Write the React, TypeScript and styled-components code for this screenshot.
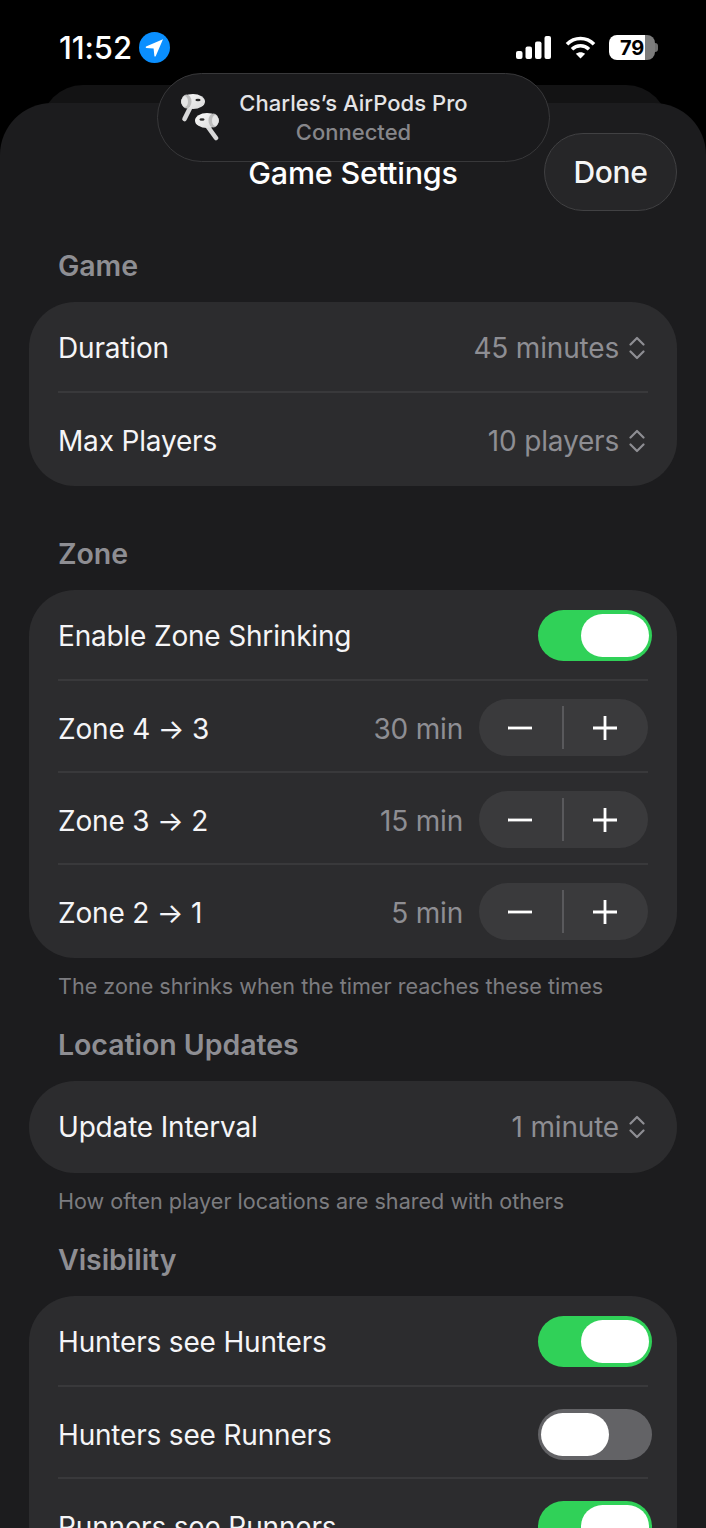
import styled, { createGlobalStyle } from "styled-components";

const GlobalStyle = createGlobalStyle`
    html, body {
        margin: 0;
        padding: 0;
        width: 706px;
        height: 1528px;
        overflow: hidden;
        background: #000;
    }
    body {
        font-family: Inter, "Liberation Sans", sans-serif;
        -webkit-font-smoothing: antialiased;
    }
`;

const Screen = styled.div`
    position: relative;
    width: 706px;
    height: 1528px;
    overflow: hidden;
    background: #000;
    display: flex;
    flex-direction: column;
`;

const StatusBar = styled.div`
    height: 103px;
    flex: none;
    box-sizing: border-box;
    padding: 32px 48px 0 59px;
    display: flex;
    justify-content: space-between;
    align-items: flex-start;
`;

const TimeGroup = styled.div`
    display: flex;
    align-items: center;
    gap: 7px;
`;

const Time = styled.span`
    color: #fff;
    font-size: 31px;
    line-height: 31px;
    font-weight: 500;
    letter-spacing: -0.1px;
`;

const StatusIcons = styled.div`
    display: flex;
    align-items: center;
    gap: 13.5px;
    height: 31px;
`;

const BatteryWrap = styled.div`
    display: flex;
    align-items: center;
`;

const BatteryBody = styled.div<{ $level: number }>`
    width: 46px;
    height: 25px;
    border-radius: 8px;
    background: linear-gradient(
        to right,
        #fff ${(p) => p.$level}%,
        #7c7c7c ${(p) => p.$level}%
    );
    display: flex;
    align-items: center;
    justify-content: center;
    color: #000;
    font-size: 20px;
    font-weight: 700;
    letter-spacing: -0.3px;
`;

const BatteryCap = styled.div`
    width: 3px;
    height: 9px;
    border-radius: 0 3px 3px 0;
    background: #6e6e6e;
`;

const BackSheet = styled.div`
    position: absolute;
    left: 41px;
    right: 38px;
    top: 85px;
    height: 60px;
    border-radius: 42px 42px 0 0;
    background: #131314;
`;

const Sheet = styled.div`
    position: relative;
    flex: 1;
    background: #1c1c1e;
    border-radius: 52px 52px 0 0;
    padding: 30px 29px 0;
    overflow: hidden;
`;

const Header = styled.header`
    display: grid;
    grid-template-columns: 1fr auto 1fr;
    align-items: center;
    margin-bottom: 38px;
`;

const Title = styled.h1`
    grid-column: 2;
    margin: 1px 0 0;
    color: #fff;
    font-size: 30.5px;
    line-height: 36px;
    font-weight: 500;
    letter-spacing: -0.2px;
    white-space: nowrap;
`;

const DoneButton = styled.button`
    grid-column: 3;
    justify-self: end;
    width: 133px;
    height: 78px;
    box-sizing: border-box;
    border-radius: 39px;
    border: 1.5px solid #414143;
    background: #262628;
    color: #f5f5f5;
    font-family: inherit;
    font-size: 30px;
    font-weight: 500;
    letter-spacing: -0.3px;
    padding: 0;
`;

const AirPodsPill = styled.div`
    position: absolute;
    left: 157px;
    top: 73px;
    width: 393px;
    height: 89px;
    box-sizing: border-box;
    border-radius: 45px;
    border: 1.5px solid #38383a;
    background: #1a1a1c;
    display: grid;
    grid-template-columns: 56px 1fr 56px;
    align-items: center;
    padding: 0 23px;
`;

const PillText = styled.div`
    display: flex;
    flex-direction: column;
    align-items: center;
    gap: 1px;
    white-space: nowrap;
`;

const PillName = styled.span`
    color: #e4e4e6;
    font-size: 22px;
    line-height: 28px;
    font-weight: 500;
    letter-spacing: 0.05px;
`;

const PillStatus = styled.span`
    color: #86868a;
    font-size: 22px;
    line-height: 28px;
    font-weight: 500;
`;

const Section = styled.section<{ $hasNote?: boolean }>`
    margin-bottom: ${(p) => (p.$hasNote ? 28 : 51)}px;
`;

const SectionLabel = styled.h2`
    margin: 0 29px 19px;
    color: #8e8e93;
    font-size: 28.5px;
    line-height: 34px;
    font-weight: 600;
    letter-spacing: -0.05px;
`;

const Card = styled.div`
    background: #2c2c2e;
    border-radius: 46px;
    padding: 0 29px;
`;

const Row = styled.div`
    position: relative;
    height: 92px;
    box-sizing: border-box;
    display: flex;
    align-items: center;
    justify-content: space-between;
    & + & {
        padding-top: 1px;
    }
    & + &::before {
        content: "";
        position: absolute;
        top: -3px;
        left: 0;
        right: 0;
        height: 2px;
        background: #39393b;
    }
`;

const RowLabel = styled.span`
    color: #f5f5f7;
    font-size: 28px;
    font-weight: 400;
    letter-spacing: -0.18px;
    display: flex;
    align-items: center;
`;

const RowValue = styled.span`
    color: #8e8e93;
    font-size: 28px;
    font-weight: 400;
    letter-spacing: -0.18px;
`;

const PickerValue = styled.div`
    display: flex;
    align-items: center;
    gap: 10px;
    padding-right: 3px;
`;

const StepperGroup = styled.div`
    display: flex;
    align-items: center;
    gap: 16px;
`;

const Stepper = styled.div`
    width: 169px;
    height: 57px;
    margin-top: -2px;
    box-sizing: border-box;
    padding-right: 2px;
    border-radius: 29px;
    background: #3a3a3c;
    display: grid;
    grid-template-columns: 1fr 2px 1fr;
    align-items: center;
    justify-items: center;
`;

const StepperRule = styled.div`
    width: 2px;
    height: 43px;
    background: #59595c;
`;

const Toggle = styled.div<{ $on: boolean }>`
    width: 114px;
    height: 51px;
    margin: -1px -4px 0 0;
    box-sizing: border-box;
    padding: 4px 3px;
    border-radius: 26px;
    background: ${(p) => (p.$on ? "#30d158" : "#636366")};
    display: flex;
    justify-content: ${(p) => (p.$on ? "flex-end" : "flex-start")};
`;

const Knob = styled.div`
    width: 68px;
    height: 43px;
    border-radius: 22px;
    background: #fff;
`;

const Note = styled.p`
    margin: 14px 29px 0;
    color: #7c7c80;
    font-size: 21.6px;
    line-height: 28px;
    font-weight: 400;
`;

function LocationBadge() {
    return (
        <svg width="31" height="31" viewBox="0 0 31 31">
            <circle cx="15.5" cy="15.5" r="15.5" fill="#0a8fff" />
            <path
                d="M24 7.2 L7 14.6 Q6.2 15.4 7.2 15.9 L14.6 16.6 L15.4 24.2 Q16 25 16.7 24.2 Z"
                fill="#fff"
            />
        </svg>
    );
}

function SignalIcon() {
    return (
        <svg width="35" height="23" viewBox="0 0 35 23" fill="#fff">
            <rect x="0" y="15" width="6.5" height="8" rx="2" />
            <rect x="9.5" y="10.5" width="6.5" height="12.5" rx="2" />
            <rect x="19" y="5.5" width="6.5" height="17.5" rx="2" />
            <rect x="28.5" y="0" width="6.5" height="23" rx="2" />
        </svg>
    );
}

function WifiIcon() {
    return (
        <svg width="31" height="23" viewBox="0 0 31 23" fill="none" stroke="#fff" strokeWidth="3.6">
            <path d="M2 8.2 C9.5 0.6 21.5 0.6 29 8.2" />
            <path d="M7 13.2 C11.8 8.6 19.2 8.6 24 13.2" />
            <path d="M15.5 22.5 L10.8 17.8 C13.4 15.6 17.6 15.6 20.2 17.8 Z" fill="#fff" stroke="none" />
        </svg>
    );
}

function AirPodsIcon() {
    return (
        <svg width="38" height="47" viewBox="0 0 38 47">
            <defs>
                <linearGradient id="bud" x1="0" y1="0" x2="1" y2="1">
                    <stop offset="0" stopColor="#fafafa" />
                    <stop offset="1" stopColor="#d8d8d8" />
                </linearGradient>
            </defs>
            <path d="M9 14 L3.5 25" stroke="#d8d8d8" strokeWidth="4.6" strokeLinecap="round" />
            <ellipse cx="12" cy="7.5" rx="12" ry="7.5" fill="url(#bud)" />
            <ellipse cx="5.5" cy="7.5" rx="5" ry="7" fill="#bdbdbd" />
            <ellipse cx="3.8" cy="7.5" rx="3.2" ry="5.4" fill="#e6e6e6" />
            <ellipse cx="17" cy="6" rx="2.6" ry="1.3" fill="#2a2a2a" />
            <path d="M27 33 L35 44" stroke="#d8d8d8" strokeWidth="4.6" strokeLinecap="round" />
            <ellipse cx="26" cy="26.5" rx="12" ry="7.5" fill="url(#bud)" />
            <ellipse cx="32.5" cy="26.5" rx="5" ry="7" fill="#bdbdbd" />
            <ellipse cx="34.2" cy="26.5" rx="3.2" ry="5.4" fill="#e6e6e6" />
            <ellipse cx="21" cy="25.5" rx="2.6" ry="1.3" fill="#2a2a2a" />
        </svg>
    );
}

function UpDownIcon() {
    return (
        <svg width="16" height="24" viewBox="0 0 16 24" fill="none" stroke="#8e8e93" strokeWidth="2.2" strokeLinecap="round" strokeLinejoin="round">
            <path d="M1.5 8.5 L8 2 L14.5 8.5" />
            <path d="M1.5 15.5 L8 22 L14.5 15.5" />
        </svg>
    );
}

function MinusIcon() {
    return (
        <svg width="24" height="24" viewBox="0 0 24 24" stroke="#fff" strokeWidth="2.8">
            <path d="M0 12 H24" />
        </svg>
    );
}

function PlusIcon() {
    return (
        <svg width="24" height="24" viewBox="0 0 24 24" stroke="#fff" strokeWidth="2.8">
            <path d="M0 12 H24 M12 0 V24" />
        </svg>
    );
}

function Picker({ value }: { value: string }) {
    return (
        <PickerValue>
            <RowValue>{value}</RowValue>
            <UpDownIcon />
        </PickerValue>
    );
}

function StepperRow({ label, value }: { label: string; value: string }) {
    return (
        <Row>
            <RowLabel>{label}</RowLabel>
            <StepperGroup>
                <RowValue>{value}</RowValue>
                <Stepper>
                    <MinusIcon />
                    <StepperRule />
                    <PlusIcon />
                </Stepper>
            </StepperGroup>
        </Row>
    );
}

function ToggleRow({ label, on }: { label: string; on: boolean }) {
    return (
        <Row>
            <RowLabel>{label}</RowLabel>
            <Toggle $on={on}>
                <Knob />
            </Toggle>
        </Row>
    );
}

function App() {
    return (
        <Screen>
            <GlobalStyle />
            <StatusBar>
                <TimeGroup>
                    <Time>11:52</Time>
                    <LocationBadge />
                </TimeGroup>
                <StatusIcons>
                    <SignalIcon />
                    <WifiIcon />
                    <BatteryWrap>
                        <BatteryBody $level={79}>79</BatteryBody>
                        <BatteryCap />
                    </BatteryWrap>
                </StatusIcons>
            </StatusBar>
            <BackSheet />
            <Sheet>
                <Header>
                    <Title>Game Settings</Title>
                    <DoneButton>Done</DoneButton>
                </Header>

                <Section>
                    <SectionLabel>Game</SectionLabel>
                    <Card>
                        <Row>
                            <RowLabel>Duration</RowLabel>
                            <Picker value="45 minutes" />
                        </Row>
                        <Row>
                            <RowLabel>Max Players</RowLabel>
                            <Picker value="10 players" />
                        </Row>
                    </Card>
                </Section>

                <Section $hasNote>
                    <SectionLabel>Zone</SectionLabel>
                    <Card>
                        <ToggleRow label="Enable Zone Shrinking" on />
                        <StepperRow label="Zone 4 → 3" value="30 min" />
                        <StepperRow label="Zone 3 → 2" value="15 min" />
                        <StepperRow label="Zone 2 → 1" value="5 min" />
                    </Card>
                    <Note>The zone shrinks when the timer reaches these times</Note>
                </Section>

                <Section $hasNote>
                    <SectionLabel>Location Updates</SectionLabel>
                    <Card>
                        <Row>
                            <RowLabel>Update Interval</RowLabel>
                            <Picker value="1 minute" />
                        </Row>
                    </Card>
                    <Note>How often player locations are shared with others</Note>
                </Section>

                <Section>
                    <SectionLabel>Visibility</SectionLabel>
                    <Card>
                        <ToggleRow label="Hunters see Hunters" on />
                        <ToggleRow label="Hunters see Runners" on={false} />
                        <ToggleRow label="Runners see Runners" on />
                    </Card>
                </Section>
            </Sheet>
            <AirPodsPill>
                <AirPodsIcon />
                <PillText>
                    <PillName>Charles’s AirPods Pro</PillName>
                    <PillStatus>Connected</PillStatus>
                </PillText>
            </AirPodsPill>
        </Screen>
    );
}

export default App;
